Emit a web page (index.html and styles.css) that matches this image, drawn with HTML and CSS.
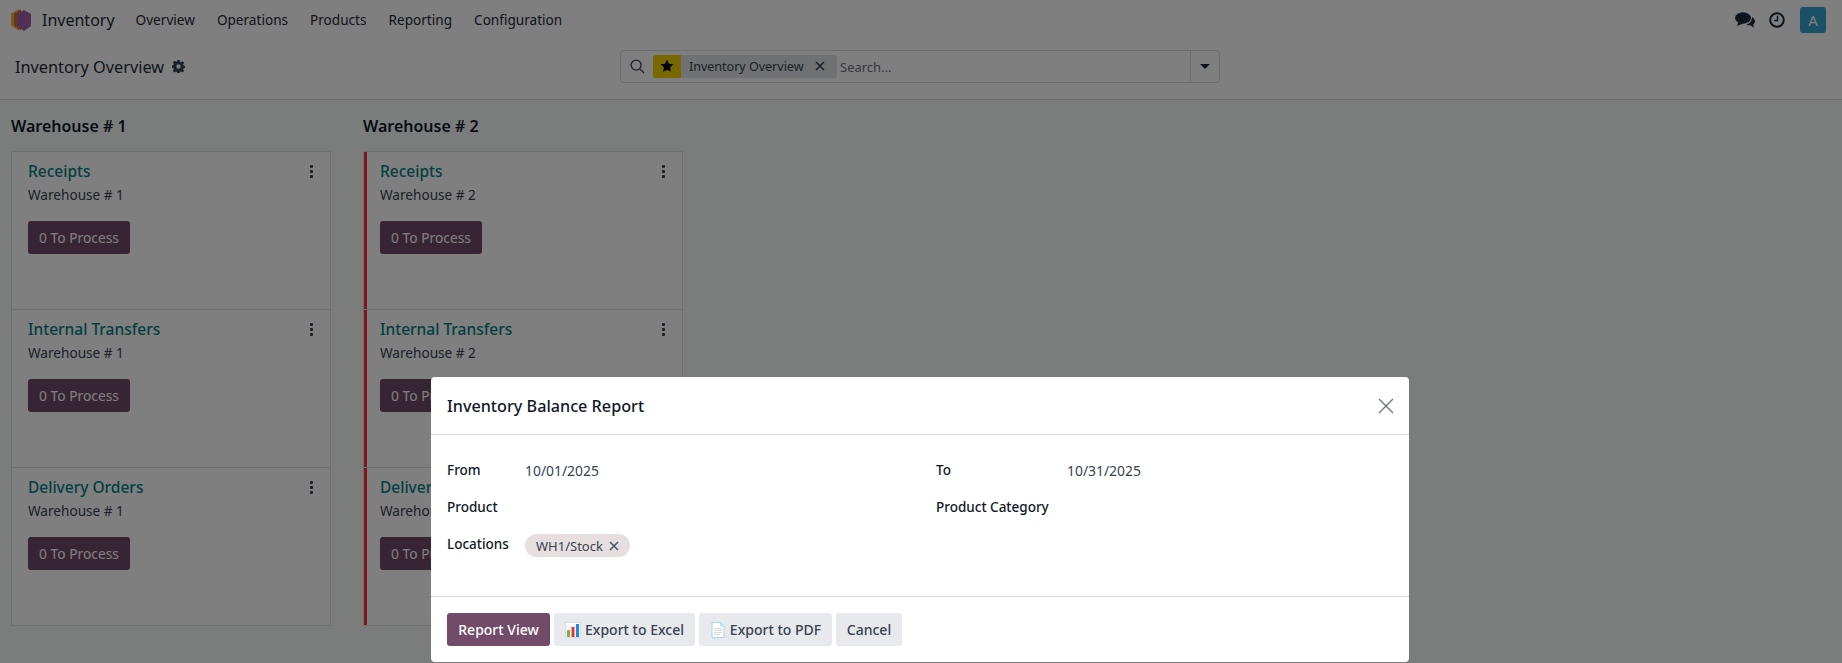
FILE: index.html
```html
<!DOCTYPE html>
<html lang="en">
<head>
    <meta charset="UTF-8">
    <title>Inventory Overview</title>
    <link rel="stylesheet" href="styles.css">
</head>
<body>
    <header class="navbar">
        <svg class="app-logo" viewBox="0 0 20 22" width="20" height="22">
            <path d="M8 0 0 4.500v12l8 5.500z" fill="#f0b040"/>
            <path d="M10 .5 3 4.500v12l7 5z" fill="#cf6a30"/>
            <path d="M13 1l7 4v12l-7 5-7-5V5z" fill="#a55fae"/>
        </svg>
        <span class="app-name">Inventory</span>
        <nav class="menu">
            <a>Overview</a>
            <a>Operations</a>
            <a>Products</a>
            <a>Reporting</a>
            <a>Configuration</a>
        </nav>
        <div class="systray">
            <svg viewBox="0 0 20 16" width="20" height="16">
                <ellipse cx="8" cy="6" rx="8" ry="5.800" fill="#1c2a3a"/>
                <path d="M3.500 10 2 14 8 11.500z" fill="#1c2a3a"/>
                <path d="M17 5c2.500 1.500 3.300 3.500 2.800 5.300-.3 1-.9 1.700-1.600 2.200l.8 3-3.800-2.300c-1.500.2-3-.1-4-.8 3.200-.3 5.800-3.300 5.800-7.400z" fill="#1c2a3a"/>
            </svg>
            <svg viewBox="0 0 16 16" width="16" height="16" fill="none" stroke="#1c2a3a">
                <circle cx="8" cy="8" r="6.800" stroke-width="2"/>
                <path d="M8.500 3.800v4.700H5" stroke-width="1.500"/>
            </svg>
            <span class="avatar">A</span>
        </div>
    </header>

    <div class="control-panel">
        <div class="breadcrumb">
            <span>Inventory Overview</span>
            <svg viewBox="0 0 16 16" width="13" height="13">
                <path fill="#374151" fill-rule="evenodd" d="M6.600 0h2.800l.4 2.200 1.300.6 1.900-1.300 2 2-1.300 1.900.6 1.300 2.200.4v2.800l-2.200.4-.6 1.300 1.300 1.900-2 2-1.900-1.300-1.300.6-.4 2.200H6.600l-.4-2.200-1.300-.6-1.900 1.300-2-2 1.300-1.900-.6-1.300L-.5 9.400V6.600l2.200-.4.6-1.300L1 3l2-2 1.900 1.300 1.300-.6zM8 5.300a2.700 2.700 0 1 0 0 5.400 2.700 2.700 0 0 0 0-5.400z"/>
            </svg>
        </div>
        <div class="searchbar">
            <svg class="search-icon" viewBox="0 0 16 16" width="15" height="15" fill="none" stroke="#374151" stroke-width="1.400">
                <circle cx="6.500" cy="6.500" r="5.300"/>
                <path d="m10.500 10.500 4.500 4.500"/>
            </svg>
            <div class="facet">
                <span class="facet-star">
                    <svg viewBox="0 0 16 16" width="14" height="14"><path d="m8 .8 2.200 4.700 5.100.6-3.800 3.500 1 5.100L8 12.200l-4.500 2.500 1-5.100L.7 6.100l5.100-.6z" fill="#000"/></svg>
                </span>
                <span class="facet-label">Inventory Overview</span>
                <svg class="facet-x" viewBox="0 0 10 10" width="10" height="10" stroke="#374151" stroke-width="1.600"><path d="m1 1 8 8M9 1l-8 8"/></svg>
            </div>
            <span class="search-input">Search...</span>
            <span class="search-toggle"><i class="caret"></i></span>
        </div>
    </div>

    <main class="overview">
        <section class="warehouse">
            <h2>Warehouse # 1</h2>
            <article class="card">
                <div class="card-top"><a>Receipts</a><span class="kebab"><i></i><i></i><i></i></span></div>
                <p>Warehouse # 1</p>
                <button class="btn-process">0 To Process</button>
            </article>
            <article class="card">
                <div class="card-top"><a>Internal Transfers</a><span class="kebab"><i></i><i></i><i></i></span></div>
                <p>Warehouse # 1</p>
                <button class="btn-process">0 To Process</button>
            </article>
            <article class="card">
                <div class="card-top"><a>Delivery Orders</a><span class="kebab"><i></i><i></i><i></i></span></div>
                <p>Warehouse # 1</p>
                <button class="btn-process">0 To Process</button>
            </article>
        </section>
        <section class="warehouse">
            <h2>Warehouse # 2</h2>
            <article class="card card-red">
                <div class="card-top"><a>Receipts</a><span class="kebab"><i></i><i></i><i></i></span></div>
                <p>Warehouse # 2</p>
                <button class="btn-process">0 To Process</button>
            </article>
            <article class="card card-red">
                <div class="card-top"><a>Internal Transfers</a><span class="kebab"><i></i><i></i><i></i></span></div>
                <p>Warehouse # 2</p>
                <button class="btn-process">0 To Process</button>
            </article>
            <article class="card card-red">
                <div class="card-top"><a>Delivery Orders</a><span class="kebab"><i></i><i></i><i></i></span></div>
                <p>Warehouse # 2</p>
                <button class="btn-process">0 To Process</button>
            </article>
        </section>
    </main>

    <div class="backdrop"></div>

    <div class="modal">
        <div class="modal-header">
            <h4>Inventory Balance Report</h4>
            <svg viewBox="0 0 16 16" width="16" height="16" stroke="#6b7280" stroke-width="1.300"><path d="m1 1 14 14M15 1 1 15"/></svg>
        </div>
        <div class="modal-body">
            <label>From</label>
            <span class="value">10/01/2025</span>
            <label>To</label>
            <span class="value">10/31/2025</span>
            <label>Product</label>
            <span class="value"></span>
            <label>Product Category</label>
            <span class="value"></span>
            <label>Locations</label>
            <span class="value">
                <span class="tag">WH1/Stock
                    <svg viewBox="0 0 10 10" width="10" height="10" stroke="#4b5563" stroke-width="1.600"><path d="m1 1 8 8M9 1l-8 8"/></svg>
                </span>
            </span>
        </div>
        <div class="modal-footer">
            <button class="btn btn-primary">Report View</button>
            <button class="btn btn-excel">
                <svg viewBox="0 0 16 16" width="16" height="16">
                    <rect x=".5" y=".5" width="15" height="15" fill="#fff" stroke="#d5dbe1"/>
                    <path d="M0 5h16M0 9h16M0 13h16" stroke="#e3e7eb"/>
                    <rect x="2" y="8" width="3" height="7" fill="#7cb342"/>
                    <rect x="6.500" y="5" width="3" height="10" fill="#e53935"/>
                    <rect x="11" y="2" width="3" height="13" fill="#1e88e5"/>
                </svg>
                Export to Excel
            </button>
            <button class="btn btn-pdf">
                <svg viewBox="0 0 16 16" width="16" height="16">
                    <path d="M2 .5h8.500L14 4v11.500H2z" fill="#fff" stroke="#a9d4f2"/>
                    <path d="M10.500.5V4H14z" fill="#d6ebfa" stroke="#a9d4f2" stroke-width=".8"/>
                    <path d="M4 6.500h8M4 8.500h8M4 10.500h8M4 12.500h6" stroke="#d3d8dd"/>
                </svg>
                Export to PDF
            </button>
            <button class="btn btn-cancel">Cancel</button>
        </div>
    </div>
</body>
</html>
```

FILE: styles.css
```css
* {
    box-sizing: border-box;
}
html, body {
    margin: 0;
    padding: 0;
    height: 663px;
    overflow: hidden;
}
body {
    position: relative;
    font-family: "Noto Sans", "Open Sans", sans-serif;
    font-size: 13.600px;
    color: #374151;
    background-color: #f6fbf8;
}

/* top bar */
.navbar {
    display: flex;
    align-items: center;
    height: 40px;
    padding: 0 16px 0 11px;
    background-color: #fff;
}
.app-logo {
    flex: none;
}
.app-name {
    margin-left: 11px;
    font-size: 16px;
    color: #1f2937;
}
.menu {
    display: flex;
    gap: 22px;
    margin: 0 0 2px 21px;
}
.menu a {
    font-size: 13.600px;
    color: #1f2937;
}
.systray {
    display: flex;
    align-items: center;
    gap: 14px;
    margin-left: auto;
}
.avatar {
    display: flex;
    align-items: center;
    justify-content: center;
    width: 26px;
    height: 26px;
    margin-left: 1px;
    border-radius: 3px;
    background-color: #36a2cc;
    color: #fff;
    font-size: 15px;
}

/* control panel */
.control-panel {
    position: relative;
    display: flex;
    align-items: center;
    height: 60px;
    padding: 0 15px 7px;
    background-color: #fff;
    border-bottom: 1px solid #d8dadd;
}
.breadcrumb {
    display: flex;
    align-items: center;
    gap: 8px;
    width: 605px;
    padding-top: 1px;
    font-size: 16.300px;
    color: #1f2937;
}
.searchbar {
    display: flex;
    align-items: center;
    width: 600px;
    height: 33px;
    border: 1px solid #d8dadd;
    border-radius: 4px;
}
.search-icon {
    margin: 0 8px 0 9px;
}
.facet {
    display: flex;
    align-items: center;
    width: 184px;
    height: 23px;
    border-radius: 3px;
    background-color: #dee2e6;
}
.facet-star {
    display: flex;
    align-items: center;
    justify-content: center;
    width: 28px;
    height: 23px;
    border-radius: 3px 0 0 3px;
    background-color: #f0d000;
}
.facet-label {
    margin-left: 8px;
    width: 126px;
    font-size: 12.500px;
    white-space: nowrap;
}
.search-input {
    margin-left: 3px;
    padding-top: 1px;
    font-size: 13px;
    color: #6b7280;
}
.search-toggle {
    display: flex;
    align-items: center;
    justify-content: center;
    width: 29px;
    height: 100%;
    margin-left: auto;
    border-left: 1px solid #d8dadd;
}
.caret {
    border-top: 5px solid #1f2937;
    border-left: 5px solid transparent;
    border-right: 5px solid transparent;
}

/* warehouses */
.overview {
    display: flex;
    gap: 32px;
    padding: 15px 0 0 11px;
}
.warehouse {
    width: 320px;
}
.warehouse h2 {
    margin: 0 0 14px;
    font-size: 16px;
    font-weight: 600;
    line-height: 22px;
    color: #111827;
}
.card {
    height: 159px;
    padding: 9px 16px;
    border: 1px solid #dfe2e0;
    background-color: #fff;
}
.card + .card {
    height: 158px;
    border-top: none;
}
.card-red {
    box-shadow: inset 3px 0 0 #ff3030;
}
.card-top {
    display: flex;
    align-items: center;
    justify-content: space-between;
    height: 20px;
}
.card-top a {
    font-size: 15.500px;
    font-weight: 500;
    color: #017e84;
}
.kebab {
    display: flex;
    flex-direction: column;
    gap: 2px;
    margin-right: 1px;
}
.kebab i {
    width: 3px;
    height: 3px;
    border-radius: 1px;
    background-color: #374151;
}
.card p {
    margin: 5px 0 17px;
    line-height: 18px;
}
.btn-process {
    height: 33px;
    width: 102px;
    padding: 0;
    border: none;
    border-radius: 3px;
    background-color: #714b67;
    color: #fff;
    font-family: inherit;
    font-size: 13.800px;
}

/* dialog */
.backdrop {
    position: absolute;
    inset: 0;
    background-color: rgba(0, 0, 0, 0.5);
}
.modal {
    position: absolute;
    left: 431px;
    top: 377px;
    width: 978px;
    height: 285px;
    display: flex;
    flex-direction: column;
    border-radius: 4px;
    background-color: #fff;
}
.modal-header {
    display: flex;
    align-items: center;
    justify-content: space-between;
    height: 58px;
    padding: 0 15px 0 16px;
    border-bottom: 1px solid #d8dadd;
}
.modal-header h4 {
    margin: 0;
    font-size: 16.200px;
    font-weight: 500;
    color: #111827;
}
.modal-body {
    flex: 1;
    display: grid;
    grid-template-columns: 78px 411px 131px 1fr;
    grid-auto-rows: 37px;
    align-items: center;
    padding: 16px 16px 0;
    border-bottom: 1px solid #d8dadd;
}
.modal-body label {
    font-size: 13.500px;
    font-weight: 500;
    color: #111827;
}
.value {
    position: relative;
    top: 1px;
    font-size: 13.900px;
}
.tag {
    display: inline-flex;
    align-items: center;
    gap: 6px;
    height: 23px;
    margin-top: 2px;
    padding: 0 11px;
    border-radius: 12px;
    background-color: #e7dfdf;
    color: #374151;
    font-size: 13px;
}
.modal-footer {
    display: flex;
    gap: 4px;
    height: 65px;
    padding: 16px 16px 0;
}
.btn {
    display: flex;
    align-items: center;
    justify-content: center;
    gap: 4px;
    height: 33px;
    padding: 0;
    border: none;
    border-radius: 3px;
    background-color: #e7e9ed;
    color: #374151;
    font-family: inherit;
    font-size: 14px;
    font-weight: 500;
}
.btn-primary {
    width: 103px;
    background-color: #714b67;
    color: #fff;
}
.btn-excel {
    width: 141px;
}
.btn-pdf {
    width: 133px;
}
.btn-cancel {
    width: 66px;
}
```
